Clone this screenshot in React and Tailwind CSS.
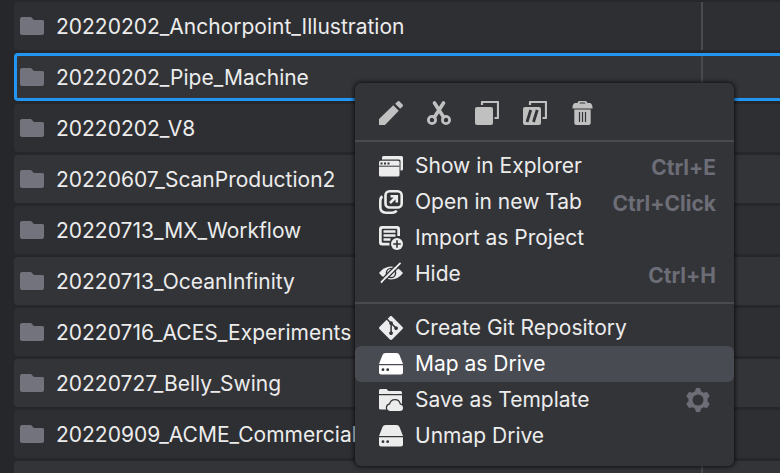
import React from 'react';
import { SiGit } from 'react-icons/si';

const folders = [
  '20220202_Anchorpoint_Illustration',
  '20220202_Pipe_Machine',
  '20220202_V8',
  '20220607_ScanProduction2',
  '20220713_MX_Workflow',
  '20220713_OceanInfinity',
  '20220716_ACES_Experiments',
  '20220727_Belly_Swing',
  '20220909_ACME_Commercial',
];

const Icon = ({ children, viewBox = '0 0 24 24' }) => (
  <svg viewBox={viewBox} className="size-6 shrink-0" fill="currentColor" aria-hidden="true">{children}</svg>
);

const FolderIcon = () => (
  <svg viewBox="0 0 24 18" className="h-[18px] w-6 shrink-0 text-[#73737d]" fill="currentColor" aria-hidden="true">
    <path d="M2 0H11L14 3H22.500Q24 3 24 4.500V16Q24 18 22 18H2Q0 18 0 16V2Q0 0 2 0Z" />
  </svg>
);

const PencilIcon = () => (
  <Icon viewBox="3 3 18 18">
    <path d="M20.71,7.04C21.1,6.65 21.1,6 20.71,5.63L18.37,3.29C18,2.9 17.35,2.9 16.96,3.29L15.12,5.12L18.87,8.87M3,16.5V21H7.5L17.81,10.300L13.700,6.18L3,16.5Z" />
  </Icon>
);

const CutIcon = () => (
  <Icon>
    <g fill="none" stroke="currentColor">
      <circle cx="5" cy="19" r="3.600" strokeWidth="2.800" />
      <circle cx="19" cy="19" r="3.600" strokeWidth="2.800" />
      <path d="M7.500 2L16.500 16M16.500 2L7.500 16" strokeWidth="3.600" strokeLinecap="round" />
    </g>
  </Icon>
);

const CopyIcon = () => (
  <Icon>
    <rect y="6" width="18" height="18" rx="2" />
    <path d="M7 4V1H23V17H19.500" fill="none" stroke="currentColor" strokeWidth="2.200" strokeLinejoin="round" />
  </Icon>
);

const DuplicateIcon = () => (
  <Icon>
    <rect y="6" width="18" height="18" rx="2" />
    <path d="M7 4V1H23V17H19.500" fill="none" stroke="currentColor" strokeWidth="2.200" strokeLinejoin="round" />
    <path d="M7.700 9L4 21M14.200 9L10.500 21" fill="none" stroke="#333438" strokeWidth="2.800" />
  </Icon>
);

const TrashIcon = () => (
  <Icon>
    <path d="M8 0H14.500Q16 0 16.500 2H19Q21 2.500 21.500 6V7.500H1.500V6Q2 2.500 4 2H6.500Q7 0 8 0ZM9 1.500L8.500 2.500H14.500L14 1.500Z" fillRule="evenodd" />
    <path d="M3.300 8.500H19.700V22Q19.700 24 17.700 24H5.300Q3.300 24 3.300 22Z" />
    <path d="M8.500 11V21M11.500 11V21M14.500 11V21" stroke="#333438" strokeWidth="1.200" />
  </Icon>
);

const ExplorerIcon = () => (
  <Icon>
    <path d="M4.500 2H22.500Q24 2 24 3.500V15Q24 16.500 22.500 16.500H21.500V7Q21.500 5.500 20 5.500H3V3.500Q3 2 4.500 2Z" />
    <path d="M1.500 6.700H19Q20.500 6.700 20.500 8.200V21Q20.500 22.500 19 22.500H1.500Q0 22.500 0 21V8.200Q0 6.700 1.500 6.700Z" />
    <path d="M0 12.200H20.500" stroke="#333438" strokeWidth="1" />
    <path d="M1.500 9.500H3.500M5 9.500H7M8.500 9.500H10.500" stroke="#333438" strokeWidth="1.800" />
  </Icon>
);

const NewTabIcon = () => (
  <Icon>
    <g fill="none" stroke="currentColor" strokeWidth="2.600">
      <rect x="6.500" y="1.300" width="16.200" height="16.200" rx="4" />
      <path d="M3.500 6.500Q1.300 7.500 1.300 11V17Q1.300 22.700 7 22.700H13Q16.500 22.700 17.500 20.500" />
      <path d="M11 13L17 7M11.500 6.200H17.800V12.500" />
    </g>
  </Icon>
);

const ImportIcon = () => (
  <Icon>
    <path d="M3 0H18Q21 0 21 3V10H18.300V4Q18.300 2.700 17 2.700H4Q2.700 2.700 2.700 4V15.500Q2.700 16.800 4 16.800H10.500V19.500H3Q0 19.500 0 16.500V3Q0 0 3 0Z" />
    <path d="M4.500 5.500H16.500M4.500 9.500H16.500M4.500 13.500H11.500" stroke="currentColor" strokeWidth="2.600" />
    <circle cx="18" cy="18" r="7.200" fill="#333438" />
    <circle cx="18" cy="18" r="6" />
    <path d="M18 14.200V21.800M14.200 18H21.800" stroke="#333438" strokeWidth="1.600" />
  </Icon>
);

const HideIcon = () => (
  <Icon>
    <path d="M0 11Q5 4.500 12 4.500T24 11Q19 17.500 12 17.500T0 11Z" />
    <circle cx="12" cy="11" r="4.600" fill="none" stroke="#333438" strokeWidth="1.400" />
    <path d="M1.500 18.500L20 0" stroke="#333438" strokeWidth="1.500" />
    <path d="M2.500 20L21 1.500" stroke="currentColor" strokeWidth="1.800" strokeLinecap="round" />
    <path d="M4.200 20.500L22.200 2.700" stroke="#333438" strokeWidth="1.200" />
  </Icon>
);

const GitIcon = () => <SiGit className="size-6 shrink-0" aria-hidden="true" />;

const DriveIcon = () => (
  <Icon>
    <path d="M6.500 1H17.500Q19.800 1 20.500 3L24 12H0L3.500 3Q4.200 1 6.500 1Z" />
    <path d="M0 13.200H24V20.500Q24 22.500 22 22.500H2Q0 22.500 0 20.500Z" />
    <circle cx="4" cy="17.700" r="1.400" fill="#333438" />
    <circle cx="8.700" cy="17.700" r="1.400" fill="#333438" />
  </Icon>
);

const TemplateIcon = () => (
  <Icon>
    <path d="M1.500 1H7.500L9.500 3H21.500Q23 3 23 4.500V6H0V2.500Q0 1 1.500 1Z" />
    <path d="M0 7.200H23V20.500Q23 21.500 21.500 21.500H1.500Q0 21.500 0 20Z" />
    <path
      d="M11 23Q8 22.500 8 19.500Q8.200 17 11 16.500Q12 12.200 16 12.200T20.800 16.500Q24 17 24 19.800Q24 23 21 23Z"
      stroke="#333438"
      strokeWidth="2.400"
      paintOrder="stroke"
    />
  </Icon>
);

const GearIcon = () => (
  <Icon>
    <path
      fillRule="evenodd"
      d="M10 0H14L15 3.300L17.500 4.700L21 4L23.700 8L21.500 10.700V13.300L23.700 16L21 20L17.500 19.300L15 20.700L14 24H10L9 20.700L6.500 19.300L3 20L0.300 16L2.500 13.300V10.700L0.300 8L3 4L6.500 4.700L9 3.300ZM12 6.500A5.500 5.500 0 1 0 12 17.500A5.500 5.500 0 1 0 12 6.500Z"
    />
  </Icon>
);

const tools = [
  { label: 'Rename', icon: PencilIcon },
  { label: 'Cut', icon: CutIcon },
  { label: 'Copy', icon: CopyIcon },
  { label: 'Duplicate', icon: DuplicateIcon },
  { label: 'Delete', icon: TrashIcon },
];

const openItems = [
  { label: 'Show in Explorer', icon: ExplorerIcon, shortcut: 'Ctrl+E' },
  { label: 'Open in new Tab', icon: NewTabIcon, shortcut: 'Ctrl+Click' },
  { label: 'Import as Project', icon: ImportIcon },
  { label: 'Hide', icon: HideIcon, shortcut: 'Ctrl+H' },
];

const driveItems = [
  { label: 'Create Git Repository', icon: GitIcon },
  { label: 'Map as Drive', icon: DriveIcon, active: true },
  { label: 'Save as Template', icon: TemplateIcon, settings: true },
  { label: 'Unmap Drive', icon: DriveIcon },
];

const MenuItem = ({ item }) => (
  <li className={item.active ? 'flex rounded-md bg-[#494b52] text-white' : 'flex text-[#ececec]'}>
    <button className="flex h-9 grow items-center gap-3 pl-6 pr-[18px] text-left">
      <item.icon />
      <span className="grow">{item.label}</span>
      {item.shortcut && <kbd className="pt-1 font-[Inter,sans-serif] font-bold text-[#6c6d76]">{item.shortcut}</kbd>}
    </button>
    {item.settings && (
      <button aria-label="Template settings" className="mr-6 text-[#6c6d76]"><GearIcon /></button>
    )}
  </li>
);

const ContextMenu = () => (
  <div className="absolute left-[355px] top-[83px] w-[379px] rounded-md bg-[#333438] pb-3 shadow-[0_0_4px_1px_rgba(0,0,0,0.7)]">
    <div className="flex gap-6 px-6 pb-[15px] pt-[18px] text-[#c0c0c0]">
      {tools.map(tool => (
        <button key={tool.label} aria-label={tool.label}><tool.icon /></button>
      ))}
    </div>
    <ul className="border-t-2 border-[#4a4b50] pb-[10px] pt-[6px]">
      {openItems.map(item => <MenuItem key={item.label} item={item} />)}
    </ul>
    <ul className="border-t-2 border-[#4a4b50] pt-[6px]">
      {driveItems.map(item => <MenuItem key={item.label} item={item} />)}
    </ul>
  </div>
);

const FolderRow = ({ name, selected }) => (
  <li
    className={
      selected
        ? 'relative flex h-12 shrink-0 rounded-l-sm bg-[#333438] after:absolute after:inset-0 after:rounded-l-sm after:border-y-3 after:border-l-3 after:border-[#2196f3]'
        : 'flex h-12 shrink-0 rounded-l-sm odd:bg-[#2e2f33] even:bg-[#333438]'
    }
  >
    {name && (
      <button className="flex grow items-center gap-3 pl-[6px] text-left">
        <FolderIcon />
        <span className="pt-[2px]">{name}</span>
      </button>
    )}
    <div className="ml-auto w-[79px] border-l-2 border-[#4a4b50]" />
  </li>
);

export default function App() {
  return (
    <main className="relative h-screen overflow-hidden bg-[#26272b] font-[Inter,sans-serif] text-[21px] leading-7 text-[#ececec]">
      <ul className="flex flex-col gap-[3px] pl-[14px] pt-[2px]">
        {folders.map((name, i) => <FolderRow key={name} name={name} selected={i === 1} />)}
        <FolderRow />
      </ul>
      <ContextMenu />
    </main>
  );
}
